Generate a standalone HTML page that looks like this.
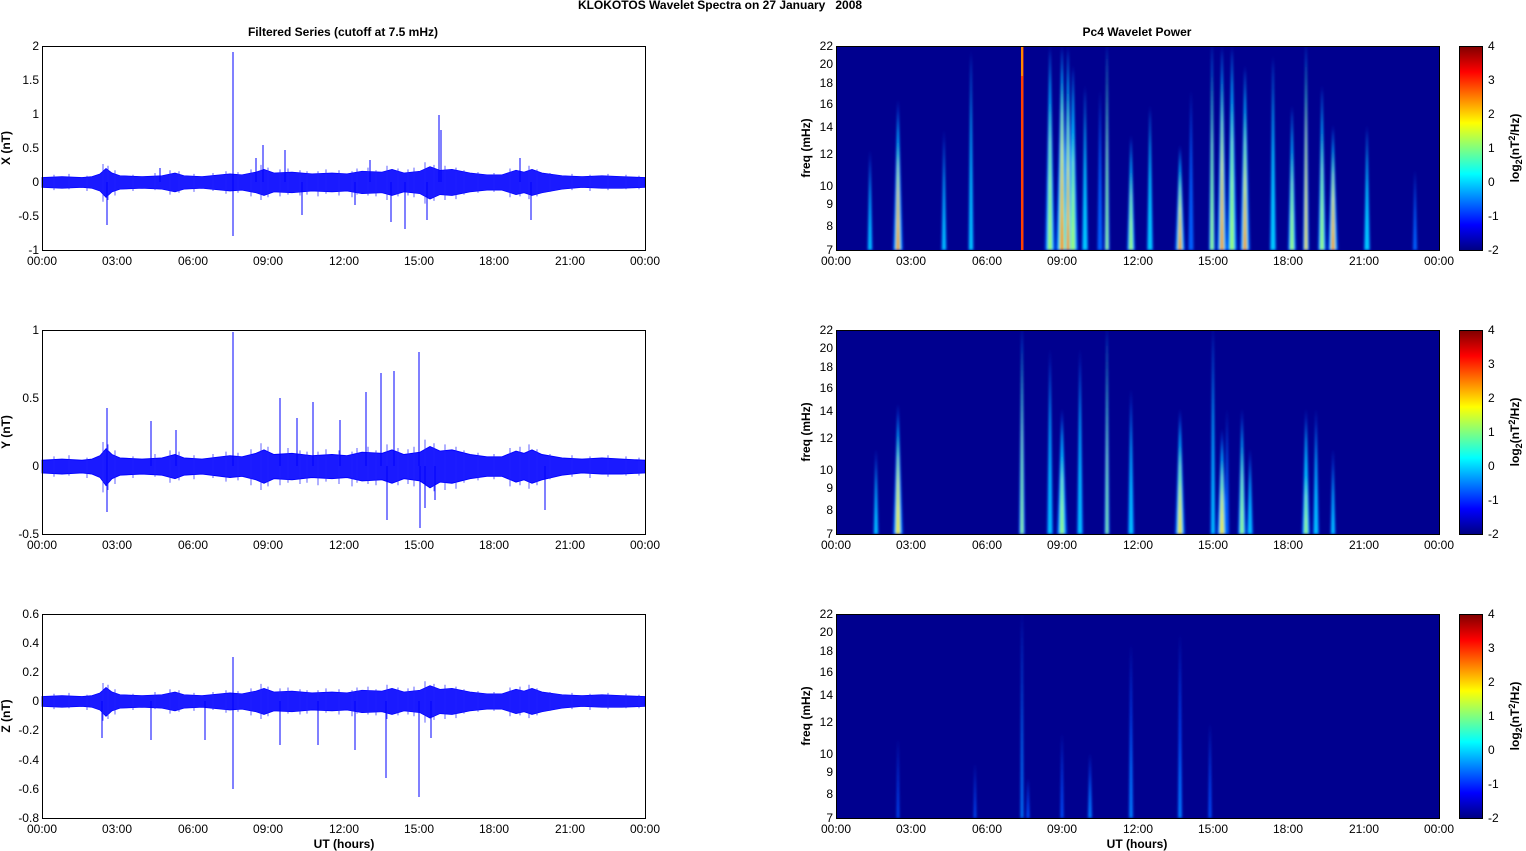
<!DOCTYPE html>
<html><head><meta charset="utf-8">
<style>
body{margin:0;background:#fff;width:1526px;height:851px;overflow:hidden}
svg{display:block;font-family:"Liberation Sans",Arial,sans-serif}
text{font-size:12px;fill:#000}
.b{font-weight:bold}
.r{text-anchor:end}
.m{text-anchor:middle}
</style></head><body>
<svg width="1526" height="851" viewBox="0 0 1526 851" xmlns="http://www.w3.org/2000/svg">
<defs>
<path id="env" d="M0,-5 L20,-6 L40,-5 L50,-6 L58,-9 L64,-15 L70,-10 L78,-7 L100,-6 L120,-7 L133,-10 L142,-7 L160,-6 L188,-9 L200,-8 L214,-11 L222,-14 L232,-10 L250,-11 L270,-9 L290,-10 L305,-9 L320,-12 L340,-11 L350,-14 L362,-10 L378,-12 L388,-17 L398,-13 L410,-14 L428,-10 L445,-8 L460,-8 L474,-13 L482,-11 L490,-14 L500,-10 L520,-7 L540,-6 L560,-7 L580,-6 L603,-5 L603,6 L580,7 L560,7 L540,6 L520,8 L500,12 L490,15 L482,12 L474,14 L460,9 L445,9 L428,11 L410,15 L398,14 L388,19 L378,13 L362,11 L350,15 L340,12 L320,13 L305,10 L290,11 L270,10 L250,12 L232,11 L222,15 L214,12 L200,9 L188,10 L160,7 L142,8 L133,11 L120,8 L100,7 L78,8 L70,11 L64,17 L58,10 L50,7 L40,6 L20,7 L0,6 Z"/>
<path id="fuzz" d="M12,-8V9 M27,-9V8 M45,-7V10 M61,-20V22 M66,-18V20 M73,-13V15 M91,-8V10 M113,-10V9 M128,-13V14 M137,-12V12 M152,-9V11 M171,-10V10 M184,-12V13 M196,-11V12 M209,-14V16 M219,-19V20 M226,-16V17 M238,-14V16 M246,-15V14 M258,-13V15 M265,-12V14 M276,-12V16 M284,-14V13 M297,-13V15 M310,-12V17 M315,-15V14 M326,-16V15 M334,-13V16 M345,-18V20 M356,-15V16 M366,-14V15 M372,-16V17 M383,-22V24 M392,-19V21 M403,-18V20 M414,-16V19 M422,-13V14 M436,-11V12 M452,-10V11 M468,-15V17 M478,-16V16 M487,-18V19 M495,-14V16 M508,-10V11 M530,-9V9 M548,-8V10 M566,-9V9 M584,-8V8 M597,-7V8"/>
<path id="tri" d="M-1,0 L0,-1 L1,0 Z"/>
<filter id="bl" x="-50%" y="-10%" width="200%" height="120%"><feGaussianBlur stdDeviation="1.2"/></filter>
<linearGradient id="cb" x1="0" y1="0" x2="0" y2="1">
<stop offset="0" stop-color="#800000"/><stop offset="0.125" stop-color="#ff0000"/><stop offset="0.375" stop-color="#ffff00"/><stop offset="0.625" stop-color="#00ffff"/><stop offset="0.875" stop-color="#0000ff"/><stop offset="1" stop-color="#000080"/>
</linearGradient>
<clipPath id="c1"><rect x="836" y="46" width="603" height="204"/></clipPath>
<clipPath id="c2"><rect x="836" y="330" width="603" height="204"/></clipPath>
<clipPath id="c3"><rect x="836" y="614" width="603" height="204"/></clipPath>
</defs>

<text class="b m" x="720" y="9">KLOKOTOS Wavelet Spectra on 27 January&#160;&#160; 2008</text>
<text class="b m" x="343" y="36">Filtered Series (cutoff at 7.5 mHz)</text>
<text class="b m" x="1137" y="36">Pc4 Wavelet Power</text>

<!-- LEFT PANELS -->
<g fill="#1a1aff" stroke="#0000ff" stroke-width="0.8">
<use href="#env" transform="translate(42,182) scale(1,0.9)"/>
<use href="#env" transform="translate(42,466) scale(1,1.15)"/>
<use href="#env" transform="translate(42,701) scale(1,0.9)"/>
</g>
<g stroke="#2020ff" stroke-width="0.7">
<use href="#fuzz" transform="translate(42,182) scale(1,0.9)"/>
<use href="#fuzz" transform="translate(42,466) scale(1,1.2)"/>
<use href="#fuzz" transform="translate(42,701) scale(1,0.9)"/>
</g>
<g stroke="#0000ff" stroke-width="1">
<path d="M233,182V52 M233,182V236 M263,182V145 M256,182V158 M439,182V115 M441,182V130 M405,182V229 M427,182V220 M107,182V225 M531,182V220 M302,182V215 M391,182V222 M285,182V150 M520,182V158 M370,182V160 M160,182V168 M355,182V205"/>
<path d="M233,466V332 M419,466V352 M381,466V373 M394,466V371 M366,466V392 M280,466V398 M107,466V408 M151,466V421 M425,466V508 M387,466V520 M435,466V500 M107,466V512 M545,466V510 M297,466V418 M340,466V420 M420,466V528 M176,466V430 M313,466V402"/>
<path d="M233,701V657 M233,701V789 M419,701V797 M386,701V778 M280,701V745 M102,701V738 M318,701V745 M431,701V738 M151,701V740 M205,701V740 M355,701V750"/>
</g>
<g fill="none" stroke="#000" stroke-width="1">
<rect x="42.5" y="46.5" width="603" height="204"/>
<rect x="42.5" y="330.5" width="603" height="204"/>
<rect x="42.5" y="614.5" width="603" height="204"/>
</g>
<g class="r">
<text class="r" x="39" y="50">2</text><text class="r" x="39" y="84">1.5</text><text class="r" x="39" y="118">1</text><text class="r" x="39" y="152">0.5</text><text class="r" x="39" y="186">0</text><text class="r" x="39" y="220">-0.5</text><text class="r" x="39" y="254">-1</text>
<text class="r" x="39" y="334">1</text><text class="r" x="39" y="402">0.5</text><text class="r" x="39" y="470">0</text><text class="r" x="39" y="538">-0.5</text>
<text class="r" x="39" y="618">0.6</text><text class="r" x="39" y="647">0.4</text><text class="r" x="39" y="676">0.2</text><text class="r" x="39" y="705">0</text><text class="r" x="39" y="734">-0.2</text><text class="r" x="39" y="764">-0.4</text><text class="r" x="39" y="793">-0.6</text><text class="r" x="39" y="822">-0.8</text>
</g>
<text class="b m" transform="translate(10,148) rotate(-90)">X (nT)</text>
<text class="b m" transform="translate(10,432) rotate(-90)">Y (nT)</text>
<text class="b m" transform="translate(10,716) rotate(-90)">Z (nT)</text>

<!-- time labels -->
<g id="tl">
<text class="m" x="42" y="265">00:00</text><text class="m" x="117" y="265">03:00</text><text class="m" x="193" y="265">06:00</text><text class="m" x="268" y="265">09:00</text><text class="m" x="344" y="265">12:00</text><text class="m" x="419" y="265">15:00</text><text class="m" x="494" y="265">18:00</text><text class="m" x="570" y="265">21:00</text><text class="m" x="645" y="265">00:00</text>
</g>
<use href="#tl" transform="translate(0,284)"/>
<use href="#tl" transform="translate(0,568)"/>
<use href="#tl" transform="translate(794,0)"/>
<use href="#tl" transform="translate(794,284)"/>
<use href="#tl" transform="translate(794,568)"/>
<text class="b m" x="344" y="848">UT (hours)</text>
<text class="b m" x="1137" y="848">UT (hours)</text>

<!-- SPECTROGRAMS -->
<rect x="836" y="46" width="603" height="204" fill="#00008f"/>
<rect x="836" y="330" width="603" height="204" fill="#00008f"/>
<rect x="836" y="614" width="603" height="204" fill="#00008f"/>

<g clip-path="url(#c1)"><g filter="url(#bl)">
<g fill="#0060ff">
<use href="#tri" transform="translate(898,250) scale(5,150)"/><use href="#tri" transform="translate(870,250) scale(2.5,100)"/><use href="#tri" transform="translate(944,250) scale(2.5,120)"/><use href="#tri" transform="translate(971,250) scale(2.5,200)"/><use href="#tri" transform="translate(1050,250) scale(5,205)"/><use href="#tri" transform="translate(1062,250) scale(6,205)"/><use href="#tri" transform="translate(1068,250) scale(5,205)"/><use href="#tri" transform="translate(1073,250) scale(5,185)"/><use href="#tri" transform="translate(1085,250) scale(3,165)"/><use href="#tri" transform="translate(1100,250) scale(2.5,160)"/><use href="#tri" transform="translate(1107,250) scale(2.5,210)"/><use href="#tri" transform="translate(1131,250) scale(4,115)"/><use href="#tri" transform="translate(1150,250) scale(3,145)"/><use href="#tri" transform="translate(1180,250) scale(5,105)"/><use href="#tri" transform="translate(1191,250) scale(2.5,160)"/><use href="#tri" transform="translate(1212,250) scale(3,210)"/><use href="#tri" transform="translate(1222,250) scale(5,205)"/><use href="#tri" transform="translate(1232,250) scale(5,205)"/><use href="#tri" transform="translate(1245,250) scale(5,185)"/><use href="#tri" transform="translate(1273,250) scale(3,195)"/><use href="#tri" transform="translate(1292,250) scale(4,145)"/><use href="#tri" transform="translate(1306,250) scale(3,210)"/><use href="#tri" transform="translate(1322,250) scale(4,165)"/><use href="#tri" transform="translate(1333,250) scale(5,125)"/><use href="#tri" transform="translate(1367,250) scale(3,125)"/><use href="#tri" transform="translate(1415,250) scale(2,80)"/>
</g>
<g fill="#00d0ff">
<use href="#tri" transform="translate(898,250) scale(3,140)"/><use href="#tri" transform="translate(870,250) scale(1.3,90)"/><use href="#tri" transform="translate(944,250) scale(1.3,110)"/><use href="#tri" transform="translate(971,250) scale(1.5,195)"/><use href="#tri" transform="translate(1050,250) scale(3,200)"/><use href="#tri" transform="translate(1062,250) scale(4,200)"/><use href="#tri" transform="translate(1068,250) scale(3,200)"/><use href="#tri" transform="translate(1073,250) scale(3,180)"/><use href="#tri" transform="translate(1085,250) scale(2,160)"/><use href="#tri" transform="translate(1107,250) scale(1.5,205)"/><use href="#tri" transform="translate(1131,250) scale(2.5,110)"/><use href="#tri" transform="translate(1150,250) scale(2,140)"/><use href="#tri" transform="translate(1180,250) scale(3,100)"/><use href="#tri" transform="translate(1212,250) scale(2,205)"/><use href="#tri" transform="translate(1222,250) scale(3,200)"/><use href="#tri" transform="translate(1232,250) scale(3,200)"/><use href="#tri" transform="translate(1245,250) scale(3,180)"/><use href="#tri" transform="translate(1273,250) scale(2,190)"/><use href="#tri" transform="translate(1292,250) scale(2.5,140)"/><use href="#tri" transform="translate(1306,250) scale(2,205)"/><use href="#tri" transform="translate(1322,250) scale(2.5,160)"/><use href="#tri" transform="translate(1333,250) scale(3,120)"/><use href="#tri" transform="translate(1367,250) scale(2,120)"/>
</g>
<g fill="#a0ff60">
<use href="#tri" transform="translate(898,250) scale(2,110)"/><use href="#tri" transform="translate(1050,250) scale(1.8,150)"/><use href="#tri" transform="translate(1062,250) scale(2.5,170)"/><use href="#tri" transform="translate(1068,250) scale(2,160)"/><use href="#tri" transform="translate(1073,250) scale(1.8,120)"/><use href="#tri" transform="translate(1107,250) scale(1,200)"/><use href="#tri" transform="translate(1131,250) scale(1.5,80)"/><use href="#tri" transform="translate(1180,250) scale(2,80)"/><use href="#tri" transform="translate(1212,250) scale(1.2,180)"/><use href="#tri" transform="translate(1222,250) scale(2,170)"/><use href="#tri" transform="translate(1232,250) scale(1.8,150)"/><use href="#tri" transform="translate(1245,250) scale(2,140)"/><use href="#tri" transform="translate(1292,250) scale(1.5,100)"/><use href="#tri" transform="translate(1306,250) scale(1.3,190)"/><use href="#tri" transform="translate(1322,250) scale(1.5,120)"/><use href="#tri" transform="translate(1333,250) scale(2,100)"/>
</g>
<g fill="#ffd000">
<use href="#tri" transform="translate(898,250) scale(1.3,95)"/><use href="#tri" transform="translate(1062,250) scale(1.5,140)"/><use href="#tri" transform="translate(1068,250) scale(1.3,120)"/><use href="#tri" transform="translate(1180,250) scale(1.3,60)"/><use href="#tri" transform="translate(1222,250) scale(1.3,130)"/><use href="#tri" transform="translate(1245,250) scale(1.3,100)"/><use href="#tri" transform="translate(1306,250) scale(0.9,150)"/><use href="#tri" transform="translate(1333,250) scale(1.3,80)"/>
</g>
<g fill="#ff3000">
<use href="#tri" transform="translate(898,250) scale(0.8,70)"/><use href="#tri" transform="translate(1062,250) scale(0.9,90)"/><use href="#tri" transform="translate(1068,250) scale(0.8,80)"/><use href="#tri" transform="translate(1180,250) scale(0.8,40)"/><use href="#tri" transform="translate(1222,250) scale(0.8,80)"/><use href="#tri" transform="translate(1245,250) scale(0.8,60)"/><use href="#tri" transform="translate(1333,250) scale(0.8,50)"/>
</g>
</g>
<rect x="1021" y="46" width="2.5" height="204" fill="#ff4000"/>
<rect x="1021.5" y="46" width="1" height="30" fill="#ffd000"/>
</g>

<g clip-path="url(#c2)"><g filter="url(#bl)">
<g fill="#0060ff">
<use href="#tri" transform="translate(898,534) scale(5,130)"/><use href="#tri" transform="translate(876,534) scale(2.5,85)"/><use href="#tri" transform="translate(1022,534) scale(3,210)"/><use href="#tri" transform="translate(1050,534) scale(3,185)"/><use href="#tri" transform="translate(1062,534) scale(5,125)"/><use href="#tri" transform="translate(1080,534) scale(3,185)"/><use href="#tri" transform="translate(1107,534) scale(2.5,210)"/><use href="#tri" transform="translate(1131,534) scale(3,145)"/><use href="#tri" transform="translate(1180,534) scale(5,125)"/><use href="#tri" transform="translate(1213,534) scale(2.5,210)"/><use href="#tri" transform="translate(1222,534) scale(5,105)"/><use href="#tri" transform="translate(1242,534) scale(4,125)"/><use href="#tri" transform="translate(1250,534) scale(3,85)"/><use href="#tri" transform="translate(1306,534) scale(4,125)"/><use href="#tri" transform="translate(1316,534) scale(3,125)"/><use href="#tri" transform="translate(1333,534) scale(2.5,85)"/><use href="#tri" transform="translate(1227,534) scale(2,125)"/>
</g>
<g fill="#00d0ff">
<use href="#tri" transform="translate(898,534) scale(3,120)"/><use href="#tri" transform="translate(876,534) scale(1.3,75)"/><use href="#tri" transform="translate(1022,534) scale(1.5,205)"/><use href="#tri" transform="translate(1050,534) scale(1.5,170)"/><use href="#tri" transform="translate(1062,534) scale(3,115)"/><use href="#tri" transform="translate(1080,534) scale(1.5,170)"/><use href="#tri" transform="translate(1107,534) scale(1.3,205)"/><use href="#tri" transform="translate(1131,534) scale(1.5,130)"/><use href="#tri" transform="translate(1180,534) scale(3,115)"/><use href="#tri" transform="translate(1213,534) scale(1.2,200)"/><use href="#tri" transform="translate(1222,534) scale(3,95)"/><use href="#tri" transform="translate(1242,534) scale(2.5,115)"/><use href="#tri" transform="translate(1250,534) scale(1.5,75)"/><use href="#tri" transform="translate(1306,534) scale(2.5,115)"/><use href="#tri" transform="translate(1316,534) scale(1.5,110)"/><use href="#tri" transform="translate(1333,534) scale(1.2,70)"/>
</g>
<g fill="#a0ff60">
<use href="#tri" transform="translate(898,534) scale(2,100)"/><use href="#tri" transform="translate(1022,534) scale(1,190)"/><use href="#tri" transform="translate(1062,534) scale(1.5,80)"/><use href="#tri" transform="translate(1107,534) scale(0.8,200)"/><use href="#tri" transform="translate(1180,534) scale(2,90)"/><use href="#tri" transform="translate(1222,534) scale(2,75)"/><use href="#tri" transform="translate(1242,534) scale(1.3,90)"/><use href="#tri" transform="translate(1306,534) scale(1.3,60)"/>
</g>
<g fill="#ffe000">
<use href="#tri" transform="translate(898,534) scale(1.3,80)"/><use href="#tri" transform="translate(1180,534) scale(1.3,55)"/><use href="#tri" transform="translate(1222,534) scale(1.3,50)"/>
</g>
</g></g>

<g clip-path="url(#c3)"><g filter="url(#bl)">
<g fill="#0050ff">
<use href="#tri" transform="translate(1022,818) scale(1.5,210)"/><use href="#tri" transform="translate(1131,818) scale(2,175)"/><use href="#tri" transform="translate(1180,818) scale(2,185)"/><use href="#tri" transform="translate(1090,818) scale(2,65)"/><use href="#tri" transform="translate(1062,818) scale(1.5,85)"/><use href="#tri" transform="translate(1210,818) scale(1.5,95)"/><use href="#tri" transform="translate(975,818) scale(1.2,55)"/><use href="#tri" transform="translate(898,818) scale(1.2,80)"/><use href="#tri" transform="translate(1028,818) scale(1.5,40)"/>
</g>
<g fill="#0090ff">
<use href="#tri" transform="translate(1022,818) scale(0.8,200)"/><use href="#tri" transform="translate(1131,818) scale(1,100)"/><use href="#tri" transform="translate(1180,818) scale(1,80)"/><use href="#tri" transform="translate(1090,818) scale(1,45)"/>
</g>
</g></g>

<g fill="none" stroke="#000" stroke-width="1">
<rect x="836.5" y="46.5" width="603" height="204"/>
<rect x="836.5" y="330.5" width="603" height="204"/>
<rect x="836.5" y="614.5" width="603" height="204"/>
</g>

<g id="fl1">
<text class="r" x="833" y="50">22</text><text class="r" x="833" y="68">20</text><text class="r" x="833" y="87">18</text><text class="r" x="833" y="108">16</text><text class="r" x="833" y="131">14</text><text class="r" x="833" y="158">12</text><text class="r" x="833" y="190">10</text><text class="r" x="833" y="208">9</text><text class="r" x="833" y="230">8</text><text class="r" x="833" y="254">7</text>
</g>
<use href="#fl1" transform="translate(0,284)"/>
<use href="#fl1" transform="translate(0,568)"/>
<text class="b m" transform="translate(810,148) rotate(-90)">freq (mHz)</text>
<text class="b m" transform="translate(810,432) rotate(-90)">freq (mHz)</text>
<text class="b m" transform="translate(810,716) rotate(-90)">freq (mHz)</text>

<g id="cbar">
<rect x="1459.5" y="46.5" width="23" height="204" fill="url(#cb)" stroke="#000"/>
<text x="1488" y="50">4</text><text x="1488" y="84">3</text><text x="1488" y="118">2</text><text x="1488" y="152">1</text><text x="1488" y="186">0</text><text x="1488" y="220">-1</text><text x="1488" y="254">-2</text>
<text class="b m" transform="translate(1519,148) rotate(-90)">log<tspan font-size="9" dy="3">2</tspan><tspan dy="-3">(nT</tspan><tspan font-size="9" dy="-4">2</tspan><tspan dy="4">/Hz)</tspan></text>
</g>
<use href="#cbar" transform="translate(0,284)"/>
<use href="#cbar" transform="translate(0,568)"/>
</svg>
</body></html>
